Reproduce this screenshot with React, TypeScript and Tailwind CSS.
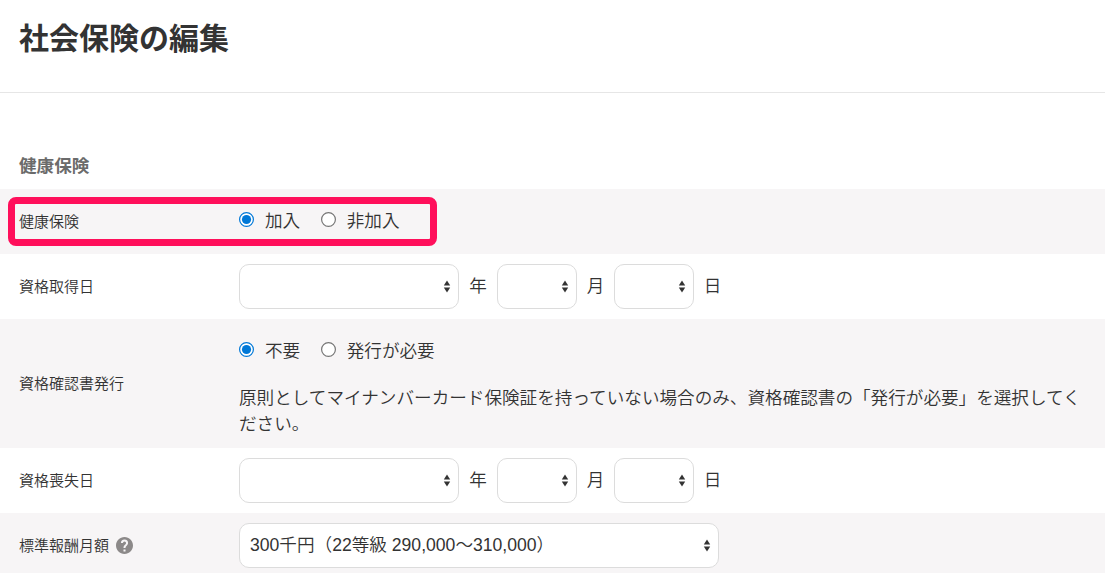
import type { ReactNode } from "react"
import { clsx } from "clsx"

function Row({ label, help, shaded, children }: { label: string; help?: boolean; shaded?: boolean; children: ReactNode }) {
    return (
        <div className={clsx("flex items-center py-2.5 pl-[19px] pr-5", shaded ? "bg-[#f7f5f6]" : "bg-white")}>
            <div className="w-[220px] shrink-0 flex items-center gap-[6.5px] text-[15px]">
                {label}
                {help && <HelpIcon />}
            </div>
            <div className="flex-1 min-w-0">{children}</div>
        </div>
    )
}

function HelpIcon() {
    return (
        <svg width="17" height="17" viewBox="2 2 20 20" fill="#8c8989">
            <path d="M12 2C6.48 2 2 6.48 2 12s4.48 10 10 10 10-4.48 10-10S17.52 2 12 2zm1.2 17h-2.4v-2.4h2.4V19zm2.25-7.75-.9.92C13.8 12.9 13.2 13.5 13.2 15h-2.4v-.5c0-1.1.45-2.1 1.17-2.83l1.24-1.26c.37-.36.59-.86.59-1.41a1.8 1.8 0 0 0-3.6 0H7.8a4.2 4.2 0 0 1 8.4 0c0 .88-.36 1.68-.75 2.25z" />
        </svg>
    )
}

function Radio({ label, checked }: { label: string; checked?: boolean }) {
    return (
        <label className="flex items-center gap-[11px]">
            <svg width="15" height="15" viewBox="0 0 15 15" className="-mt-0.5">
                <circle cx="7.5" cy="7.5" r="6.9" fill="#fff" stroke={checked ? "#0078d7" : "#767676"} strokeWidth="1.2" />
                {checked && <circle cx="7.5" cy="7.5" r="4.6" fill="#0078d7" />}
            </svg>
            <span>{label}</span>
        </label>
    )
}

function RadioGroup({ options }: { options: string[] }) {
    return (
        <div className="h-[45px] flex items-center gap-[20.5px] pb-0.5">
            {options.map((option, i) => (
                <Radio key={option} label={option} checked={i === 0} />
            ))}
        </div>
    )
}

function Select({ className, value }: { className: string; value?: string }) {
    return (
        <div className={clsx("h-[45px] flex items-center justify-between rounded-[10px] border border-[#dcdcdc] bg-white pl-2.5 pr-[7px]", className)}>
            <span className="pb-0.5 whitespace-nowrap">{value}</span>
            <svg width="8" height="13" viewBox="0 0 8 13" fill="#333" className="shrink-0">
                <path d="M4 0.5 7.2 5.5H0.8z" />
                <path d="M4 12.5 0.8 7.5h6.4z" />
            </svg>
        </div>
    )
}

function DateFields() {
    return (
        <div className="flex items-center">
            <Select className="w-[220px]" />
            <span className="w-[38px] pb-0.5 text-center">年</span>
            <Select className="w-20" />
            <span className="w-[37px] pb-0.5 text-center">月</span>
            <Select className="w-20" />
            <span className="w-[37px] pb-0.5 text-center">日</span>
        </div>
    )
}

function App() {
    return (
        <main className="relative h-[573px] overflow-hidden bg-white font-['Liberation_Sans','Noto_Sans_CJK_JP',sans-serif] font-[350] text-[17.6px] leading-[26px] text-[#333]">
            <header className="h-[93px] border-b border-[#e6e6e6] pl-[19px] pt-[17px]">
                <h1 className="text-[30px] leading-[44px] font-bold">社会保険の編集</h1>
            </header>
            <h2 className="mt-[60px] mb-2.5 pl-[19px] font-bold text-[#6b6b6b]">健康保険</h2>
            <Row label="健康保険" shaded>
                <RadioGroup options={["加入", "非加入"]} />
            </Row>
            <Row label="資格取得日">
                <DateFields />
            </Row>
            <Row label="資格確認書発行" shaded>
                <RadioGroup options={["不要", "発行が必要"]} />
                <p className="mt-[11px] mb-px">
                    原則としてマイナンバーカード保険証を持っていない場合のみ、資格確認書の「発行が必要」を選択してください。
                </p>
            </Row>
            <Row label="資格喪失日">
                <DateFields />
            </Row>
            <Row label="標準報酬月額" help shaded>
                <Select className="w-[480px]" value="300千円（22等級 290,000～310,000）" />
            </Row>
            {/* highlight frame over the first row */}
            <div className="absolute left-2 top-[197px] w-[429px] h-[49px] rounded-lg border-[7px] border-[#ff0f5b]" />
        </main>
    )
}

export default App
